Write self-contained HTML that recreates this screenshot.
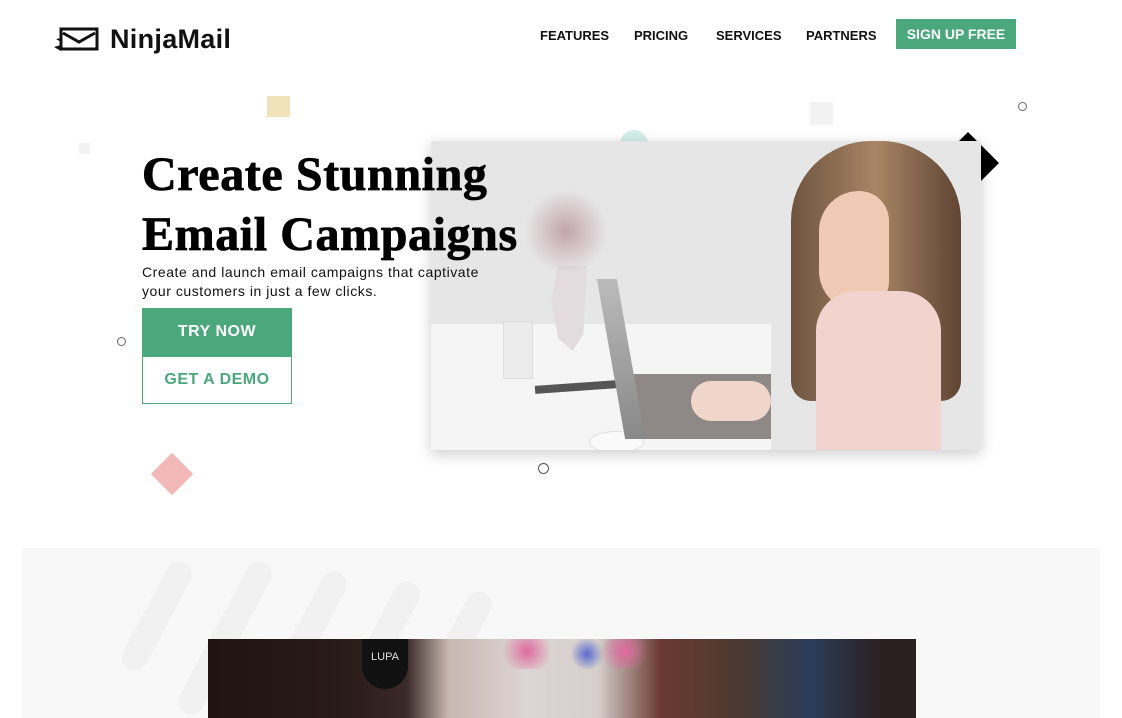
<!DOCTYPE html>
<html><head><style>
*{margin:0;padding:0;box-sizing:border-box}
body{width:1122px;height:715px;overflow:hidden;background:#fff;font-family:"Liberation Sans",sans-serif;position:relative}
.a{position:absolute}
.nav a{position:absolute;top:28px;font-size:13px;font-weight:bold;color:#111;text-decoration:none}
h1{position:absolute;left:142px;top:145px;font-family:"Liberation Serif",serif;font-weight:bold;font-size:48px;line-height:60px;color:#000;z-index:3;letter-spacing:0.6px;-webkit-text-stroke:0.8px #000}
.sub{left:142px;top:263px;font-size:14px;line-height:19px;color:#111;z-index:3;letter-spacing:0.55px}
</style></head><body>
<svg class="a" style="left:53px;top:27px" width="46" height="26" viewBox="0 0 46 26">
<rect x="8" y="2" width="36" height="20" fill="none" stroke="#111" stroke-width="3"/>
<path d="M10 6 L26 15 L42 6" fill="none" stroke="#111" stroke-width="3"/>
<path d="M1 20 L8 18 L8 24 Z M3 12 L8 11 L8 15 Z" fill="#111"/>
</svg>
<div class="a" style="left:110px;top:24px;font-size:27px;font-weight:bold;color:#111;letter-spacing:0.3px">NinjaMail</div>
<div class="nav">
<a style="left:540px">FEATURES</a>
<a style="left:634px">PRICING</a>
<a style="left:716px">SERVICES</a>
<a style="left:806px">PARTNERS</a>
</div>
<div class="a" style="left:896px;top:19px;width:120px;height:30px;background:#4aa87c;color:#fff;font-weight:bold;font-size:14px;line-height:30px;text-align:center">SIGN UP FREE</div>
<div class="a" style="left:267px;top:96px;width:23px;height:21px;background:#f0e2bb"></div>
<div class="a" style="left:79px;top:143px;width:11px;height:11px;background:#f2f2f2"></div>
<div class="a" style="left:810px;top:102px;width:23px;height:23px;background:#f2f2f2"></div>
<div class="a" style="left:1018px;top:102px;width:9px;height:9px;border:1px solid #666;border-radius:50%"></div>
<div class="a" style="left:117px;top:337px;width:9px;height:9px;border:1px solid #666;border-radius:50%"></div>
<div class="a" style="left:538px;top:463px;width:11px;height:11px;border:1px solid #555;border-radius:50%"></div>
<div class="a" style="left:620px;top:130px;width:28px;height:28px;background:#d4eee8;border-radius:50%"></div>
<div class="a" style="left:157px;top:459px;width:30px;height:30px;background:#f3b9b9;transform:rotate(45deg)"></div>
<div class="a" style="left:958px;top:132px;width:0;height:0;border-left:10px solid transparent;border-right:10px solid transparent;border-bottom:10px solid #000"></div>
<div class="a" style="left:981px;top:145px;width:0;height:0;border-top:18px solid transparent;border-bottom:18px solid transparent;border-left:18px solid #000"></div>
<div class="a" style="left:431px;top:141px;width:550px;height:309px;overflow:hidden;box-shadow:0 4px 14px rgba(0,0,0,.2);background:#e6e6e7">
 <div class="a" style="left:0;top:183px;width:340px;height:130px;background:#f5f5f5"></div>
 <div class="a" style="left:120px;top:125px;width:36px;height:85px;background:#e2dcde;clip-path:polygon(20% 0,100% 0,90% 80%,60% 100%,20% 85%,0 40%)"></div>
 <div class="a" style="left:85px;top:50px;width:100px;height:80px;background:radial-gradient(circle,rgba(160,100,110,.5),rgba(0,0,0,0) 65%)"></div>
 <div class="a" style="left:72px;top:180px;width:30px;height:58px;background:#ececec;border:1px solid #ddd"></div>
 <div class="a" style="left:104px;top:242px;width:82px;height:8px;background:#555;transform:rotate(-4deg)"></div>
 <div class="a" style="left:158px;top:290px;width:55px;height:22px;background:#fafafa;border-radius:50%;border:1px solid #ddd"></div>
 <div class="a" style="left:195px;top:233px;width:145px;height:65px;background:#8e8886"></div>
 <div class="a" style="left:180px;top:138px;width:20px;height:160px;background:linear-gradient(#bbb,#888);transform:skewX(10deg)"></div>
 <div class="a" style="left:260px;top:240px;width:80px;height:40px;background:#f0d5ca;border-radius:20px"></div>
 <div class="a" style="left:360px;top:0;width:170px;height:260px;background:linear-gradient(90deg,#6e5440,#a88565,#5f4432);border-radius:80px 80px 20px 20px"></div>
 <div class="a" style="left:388px;top:50px;width:70px;height:120px;background:#f0cab5;border-radius:40px 30px 30px 40px"></div>
 <div class="a" style="left:385px;top:150px;width:125px;height:160px;background:#f2d3cd;border-radius:40px 40px 0 0"></div>
</div>
<h1>Create Stunning<br>Email Campaigns</h1>
<div class="a sub">Create and launch email campaigns that captivate<br>your customers in just a few clicks.</div>
<div class="a" style="left:142px;top:308px;width:150px;height:48px;background:#4aa87c;color:#fff;font-weight:bold;font-size:16px;line-height:48px;text-align:center;letter-spacing:0.5px">TRY NOW</div>
<div class="a" style="left:142px;top:356px;width:150px;height:48px;border:1px solid #4aa87c;color:#4aa87c;font-weight:bold;font-size:16px;line-height:46px;text-align:center;background:#fff;letter-spacing:0.5px">GET A DEMO</div>
<div class="a" style="left:22px;top:548px;width:1078px;height:170px;background:#f8f8f8;overflow:hidden">
 <div class="a" style="width:26px;height:120px;background:#f1f1f1;border-radius:13px;transform:rotate(28deg);transform-origin:top;left:150px;top:15px"></div>
 <div class="a" style="width:26px;height:170px;background:#f1f1f1;border-radius:13px;transform:rotate(28deg);transform-origin:top;left:230px;top:15px"></div>
 <div class="a" style="width:26px;height:170px;background:#f1f1f1;border-radius:13px;transform:rotate(28deg);transform-origin:top;left:305px;top:25px"></div>
 <div class="a" style="width:26px;height:170px;background:#f1f1f1;border-radius:13px;transform:rotate(28deg);transform-origin:top;left:378px;top:35px"></div>
 <div class="a" style="width:26px;height:170px;background:#f1f1f1;border-radius:13px;transform:rotate(28deg);transform-origin:top;left:450px;top:45px"></div>
 <div class="a" style="left:186px;top:91px;width:708px;height:80px;background:linear-gradient(90deg,#1e1412 0,#2a1c18 20%,#3a2a28 28%,#c8b8b0 34%,#ddd5d3 45%,#d6cfcc 55%,#6b3a32 64%,#4a3a30 75%,#2a3d5a 85%,#2a2020 95%)"></div>
 <div class="a" style="left:340px;top:91px;width:46px;height:50px;background:#111;border-radius:0 0 23px 23px;color:#ddd;font-size:11px;text-align:center;padding-top:12px">LUPA</div>
 <div class="a" style="left:475px;top:91px;width:150px;height:30px;background:radial-gradient(circle at 20% 40%,#e06aa0 0,transparent 20%),radial-gradient(circle at 60% 50%,#5a6ad0 0,transparent 18%),radial-gradient(circle at 85% 40%,#e06aa0 0,transparent 18%)"></div>
</div>
</body></html>
